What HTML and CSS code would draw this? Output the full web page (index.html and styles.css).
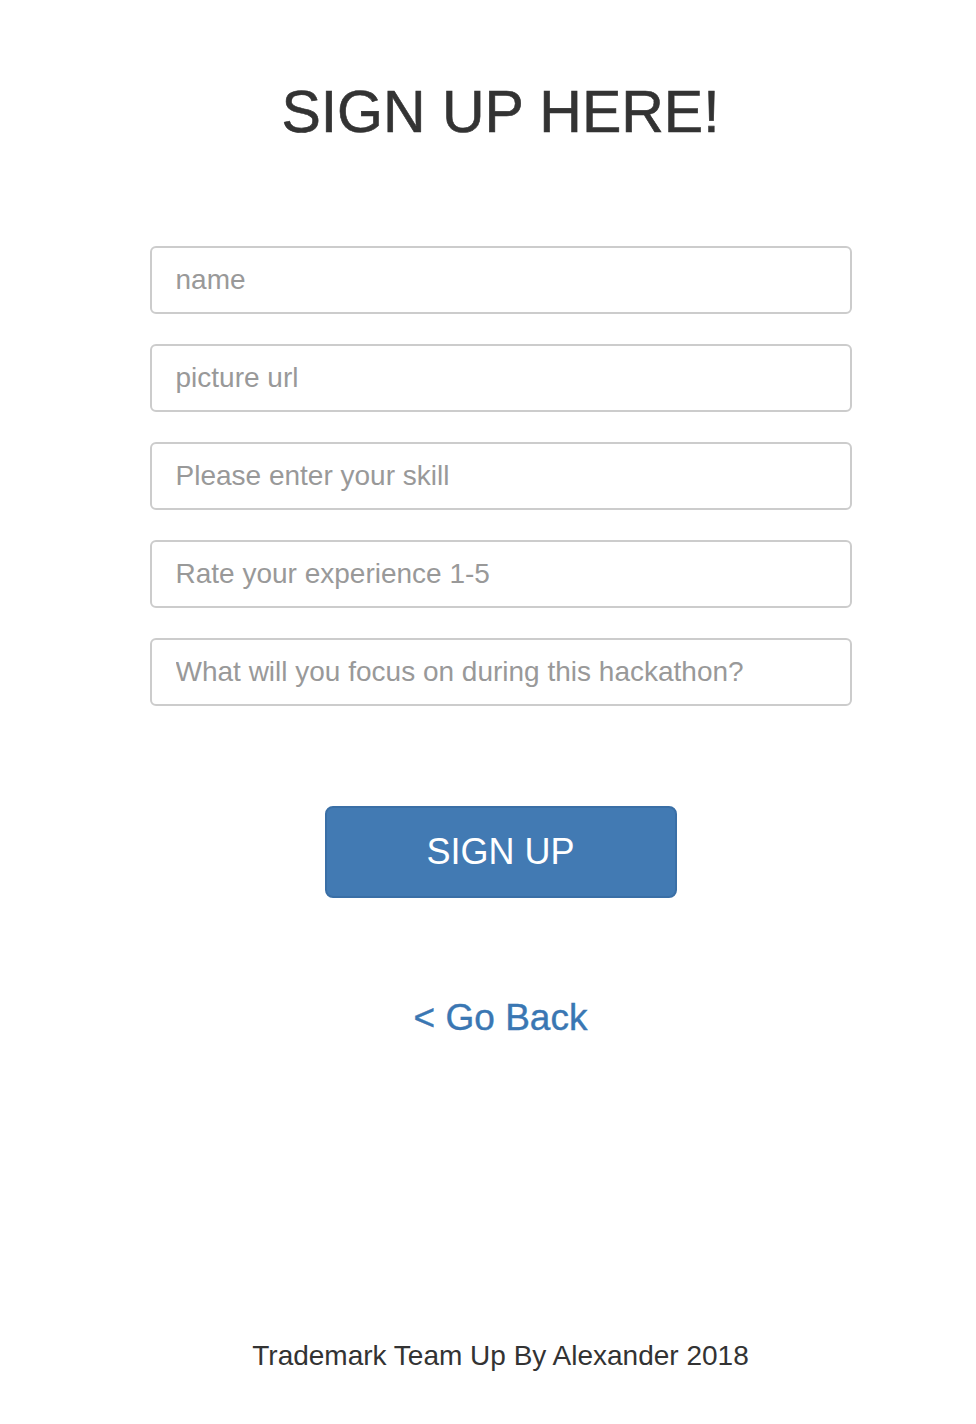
FILE: index.html
```html
<!DOCTYPE html>
<html>
<head>
<meta charset="utf-8">
<link rel="stylesheet" href="styles.css">
</head>
<body>
<main class="page">
  <h1 class="title">SIGN UP HERE!</h1>
  <form class="form">
    <input class="field" type="text" placeholder="name">
    <input class="field" type="text" placeholder="picture url">
    <input class="field" type="text" placeholder="Please enter your skill">
    <input class="field" type="text" placeholder="Rate your experience 1-5">
    <input class="field" type="text" placeholder="What will you focus on during this hackathon?">
    <button class="btn" type="button">SIGN UP</button>
  </form>
  <a class="back" href="#">&lt; Go Back</a>
  <footer class="footer">Trademark Team Up By Alexander 2018</footer>
</main>
</body>
</html>
```

FILE: styles.css
```css
html, body {
  margin: 0;
  padding: 0;
  background: #fff;
  overflow: hidden;
}
body {
  font-family: "Liberation Sans", Arial, sans-serif;
  color: #333;
}
.page {
  width: 1001px;
  height: 1424px;
  display: flex;
  flex-direction: column;
  align-items: center;
}
.title {
  margin: 78px 0 0;
  font-size: 59px;
  font-weight: 400;
  line-height: 68px;
  color: #333;
  -webkit-text-stroke: 0.6px #333;
}
.form {
  margin-top: 100px;
  width: 702px;
  display: flex;
  flex-direction: column;
  align-items: center;
  gap: 30px;
}
.field {
  box-sizing: border-box;
  width: 702px;
  height: 68px;
  border: 2px solid #ccc;
  border-radius: 6px;
  padding: 0 24px;
  font-family: "Liberation Sans", Arial, sans-serif;
  font-size: 28px;
  color: #555;
  background: #fff;
  outline: none;
}
.field::placeholder {
  color: #999;
}
.btn {
  margin-top: 70px;
  box-sizing: border-box;
  width: 352px;
  height: 92px;
  background: #427ab3;
  border: 2px solid #3a6fa6;
  border-radius: 8px;
  color: #fff;
  font-family: "Liberation Sans", Arial, sans-serif;
  font-size: 36px;
  cursor: pointer;
}
.back {
  margin-top: 98px;
  font-size: 37px;
  line-height: 44px;
  color: #3a77b3;
  text-decoration: none;
  -webkit-text-stroke: 0.4px #3a77b3;
}
.footer {
  margin-top: auto;
  margin-bottom: 50px;
  font-size: 28px;
  line-height: 36px;
  color: #333;
}
```
